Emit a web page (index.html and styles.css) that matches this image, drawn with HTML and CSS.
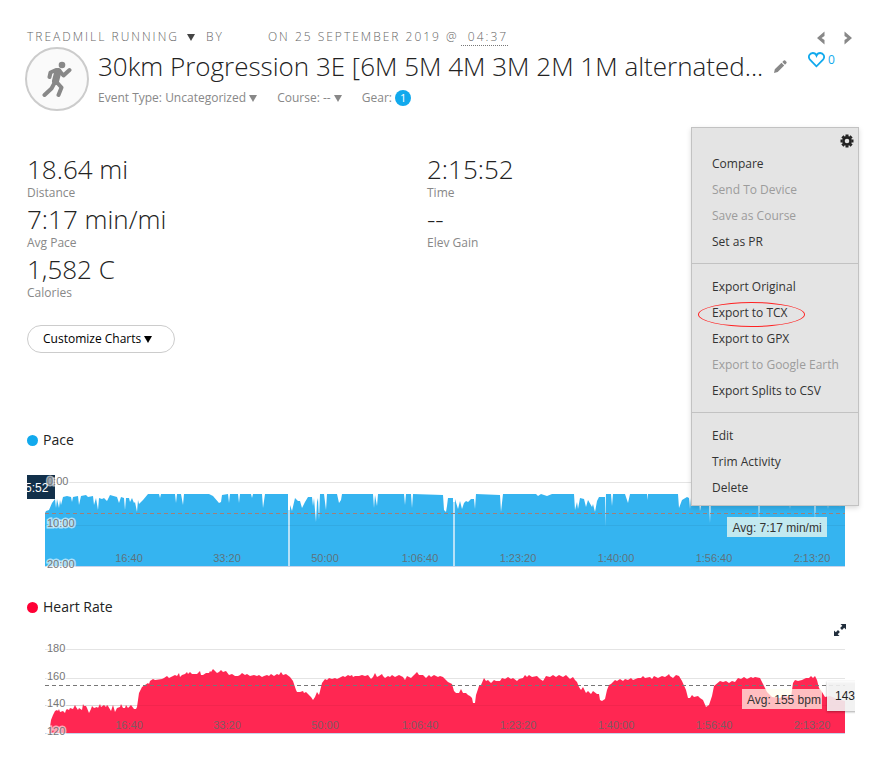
FILE: index.html
```html
<!DOCTYPE html>
<html lang="en">
<head>
<meta charset="utf-8">
<title>30km Progression</title>
<link rel="stylesheet" href="styles.css">
</head>
<body>
<header class="activity">
  <div class="byline">
    <button class="type" type="button">Treadmill Running <svg class="caret" viewBox="0 0 8 7"><path d="M0 0h8L4 7z"/></svg></button>
    <span>by</span>
    <span class="date">on 25 September 2019 @<a class="time" href="#"> 04:37</a></span>
  </div>
  <nav class="pager">
    <a href="#" aria-label="Previous"><svg width="8" height="14" viewBox="0 0 8 14"><path d="M7.500 .5v4.500L4.500 7l3 2v4.500L0 7z"/></svg></a>
    <a href="#" aria-label="Next"><svg width="8" height="14" viewBox="0 0 8 14"><path d="M.5 .5v4.500L3.500 7l-3 2v4.500L8 7z"/></svg></a>
  </nav>
  <div class="summary">
    <div class="badge">
      <svg width="30" height="36" viewBox="0 0 30 36"><circle cx="20" cy="4" r="3.300"/><g fill="none" stroke="#888" stroke-linecap="round" stroke-linejoin="round"><path d="M16 10.500l-2.500 9.500" stroke-width="7"/><path d="M14 9L8.500 11.500 7.500 16M18 10.500l3.500 4L27.500 9M13 21l-3.500 6.500L2.500 34M15 21.500l4.500 5L16.500 34" stroke-width="4"/></g></svg>
    </div>
    <div class="naming">
      <div class="titlebar">
        <h1>30km Progression 3E [6M 5M 4M 3M 2M 1M alternated...</h1>
        <button class="edit" type="button" aria-label="Edit title"><svg width="13" height="13" viewBox="0 0 13 13"><path d="M0 13l.8-3.800L7.500 2.800l2.700 2.700L3.700 12zM8.300 2L9.800.5Q10.500 0 11.200.6l1.200 1.200q.6.700 0 1.400L11 4.700z"/></svg></button>
      </div>
      <div class="meta">
        <button type="button">Event Type: Uncategorized <svg class="caret" viewBox="0 0 8 7"><path d="M0 0h8L4 7z"/></svg></button>
        <button type="button">Course: -- <svg class="caret" viewBox="0 0 8 7"><path d="M0 0h8L4 7z"/></svg></button>
        <span>Gear: <b class="count">1</b></span>
      </div>
    </div>
  </div>
  <button class="like" type="button" aria-label="Like"><svg width="17" height="16" viewBox="0 0 17 16"><path d="M8.500 14.300L2.200 8C-.8 4.500 2 1 4.800 1 6.800 1 8 2.300 8.500 3.600 9 2.300 10.200 1 12.200 1 15 1 17.800 4.500 14.800 8z" fill="none" stroke="#11a9ed" stroke-width="1.800"/></svg> 0</button>
</header>

<main>
  <section class="overview">
    <dl class="stats">
      <div><dd>18.64 mi</dd><dt>Distance</dt></div>
      <div><dd>2:15:52</dd><dt>Time</dt></div>
      <div><dd>7:17 min/mi</dd><dt>Avg Pace</dt></div>
      <div><dd>--</dd><dt>Elev Gain</dt></div>
      <div><dd>1,582 C</dd><dt>Calories</dt></div>
    </dl>
    <button class="customize" type="button">Customize Charts <svg class="caret" viewBox="0 0 8 7"><path d="M0 0h8L4 7z"/></svg></button>
    <aside class="menu">
      <button class="gear" type="button" aria-label="Settings"><svg width="14" height="14" viewBox="-7 -7 14 14"><g fill="none" stroke="#222"><circle r="3.600" stroke-width="2.600"/><path d="M0-6.500v2M0 6.500v-2M-6.500 0h2M6.500 0h-2M-4.600-4.600l1.400 1.400M4.600 4.600l-1.400-1.400M-4.600 4.600l1.400-1.400M4.600-4.600l-1.400 1.400" stroke-width="3"/></g></svg></button>
      <ul>
        <li><button type="button">Compare</button></li>
        <li><button type="button" disabled>Send To Device</button></li>
        <li><button type="button" disabled>Save as Course</button></li>
        <li><button type="button">Set as PR</button></li>
      </ul>
      <ul>
        <li><button type="button">Export Original</button></li>
        <li class="marked"><button type="button">Export to TCX</button></li>
        <li><button type="button">Export to GPX</button></li>
        <li><button type="button" disabled>Export to Google Earth</button></li>
        <li><button type="button">Export Splits to CSV</button></li>
      </ul>
      <ul>
        <li><button type="button">Edit</button></li>
        <li><button type="button">Trim Activity</button></li>
        <li><button type="button">Delete</button></li>
      </ul>
    </aside>
  </section>

  <section class="chart pace">
    <h2>Pace</h2>
    <svg class="plot" viewBox="-18 -8 828 100">
      <path class="grid" d="M0 .5H800"/>
      <path class="ghost" d="M243 28h2v56h-2zM408 20h2v64h-2z"/>
      <path class="area" d="M0 84V31L1 29 4 28 7 21 10 17 11 26 12 17 14 26 15 18 16 23 18 15 22 14 26 15 27 20 28 15 33 14 34 23 36 14 41 13 43 15 48 14 49 23 51 16 53 28 54 16 57 17 59 16 62 19 65 13 72 15 74 21 76 15 79 16 80 28 81 16 84 16 85 20 87 16 89 21 90 20 92 30 93 18 94 22 98 18 103 12 114 12 115 16 116 12 130 12 131 21 132 12 136 12 138 23 139 12 164 12 168 14 174 21 176 20 177 13 183 12 184 21 185 12 193 12 194 21 195 12 206 12 207 16 208 12 217 12 218 26 220 12 243 12V84H245V23L247 29 250 16 253 19 255 19 257 26 260 20 263 15 267 15 268 24 269 16 271 40 272 20 273 16 274 38 275 12 279 12 281 28 282 12 292 12 294 21 296 18 297 12 328 12 329 26 330 13 332 24 333 12 359 12 360 23 361 12 366 12 367 26 368 12 398 13 399 28 401 30 402 24 403 16 408 16V84H410V17L413 27 415 19 417 27 419 21 421 19 423 20 426 17 429 17 430 27 431 12 455 13 456 30 458 12 491 12 493 14 496 12 502 14 507 12 525 12 529 12 530 28 532 20 533 27 535 16 539 17 541 25 543 18 547 25 548 22 550 30 552 19 554 15 560 15 560 45 561 12 566 12 567 24 568 12 580 12 583 21 585 12 602 12 602 18 603 12 633 12 634 26 637 18 642 15 644 16 645 27 646 16 654 18 655 29 657 18 664 18 665 41 666 14 713 14 714 38 715 15 744 15 745 27 746 15 769 15 770 38 771 15 782 15 783 27 784 15 794 15 795 25 796 15H800V84z"/>
      <path class="grid inner" d="M0 43.500H800"/>
      <path class="base" d="M0 84.500H800"/>
      <path class="avg warm" d="M0 31.500H800"/>
      <rect class="cursor" x="-18" y="-7" width="28" height="24"/>
      <text class="cursor-text" x="-20" y="10">5:52</text>
      <g class="y"><text x="2" y="3">0:00</text><text x="2" y="45">10:00</text><text x="2" y="86">20:00</text></g>
      <g class="x"><text x="84" y="80">16:40</text><text x="182" y="80">33:20</text><text x="280" y="80">50:00</text><text x="375" y="80">1:06:40</text><text x="473" y="80">1:23:20</text><text x="571" y="80">1:40:00</text><text x="669" y="80">1:56:40</text><text x="767" y="80">2:13:20</text></g>
      <rect class="tag" x="682" y="35" width="100" height="20"/>
      <text class="tag-text" x="732" y="50">Avg: 7:17 min/mi</text>
    </svg>
  </section>

  <section class="chart heart">
    <h2>Heart Rate</h2>
    <button class="expand" type="button" aria-label="Expand"><svg width="12" height="12" viewBox="0 0 12 12"><path d="M6.500 0H12v5.500L10.200 3.700 8 5.900 6.100 4 8.300 1.800zM5.500 12H0V6.500L1.800 8.300 4 6.100 5.900 8 3.700 10.200z"/></svg></button>
    <svg class="plot" viewBox="-18 -8 828 100">
      <path class="grid" d="M0-.5H800M0 28.500H800M0 55.500H800"/>
      <path class="area" d="M4 83L5 77 6 70 8 65 10 61 12 60 13 61 14 59 15 62 18 61 20 63 21 60 22 59 24 60 25 58 28 59 30 55 31 57 33 60 34 58 37 60 38 54 39 56 41 56 42 58 44 63 46 59 47 56 49 58 52 57 53 58 55 54 56 57 59 55 61 57 62 55 63 56 66 61 68 55 70 62 72 58 75 57 76 54 77 56 78 58 80 58 81 55 83 58 86 55 89 59 91 59 92 57 94 43 97 37 100 35 103 33 104 34 105 31 108 29 110 30 117 29 119 28 122 26 124 28 126 27 130 25 132 26 134 23 135 27 137 25 140 24 142 22 143 24 145 22 147 24 152 24 155 21 156 25 158 25 161 23 164 23 165 21 166 22 168 19 170 21 172 23 174 22 176 20 178 22 181 21 184 25 187 24 190 26 193 26 195 25 197 23 200 25 202 24 205 26 209 25 212 26 214 25 217 27 219 26 222 25 224 26 226 24 229 26 232 24 234 25 236 22 238 25 241 24 245 27 248 31 251 40 252 42 255 42 258 41 259 43 261 42 263 44 266 47 268 50 270 47 272 42 274 45 277 33 280 29 282 30 284 28 287 29 290 28 292 29 298 26 300 27 303 25 305 26 307 25 308 27 310 26 314 26 317 25 320 26 323 25 326 29 328 27 330 23 332 27 334 26 337 24 338 26 340 28 343 26 345 27 347 25 350 27 354 25 358 27 360 30 362 26 366 28 369 25 372 22 374 25 378 25 381 28 384 25 386 27 389 25 393 27 395 26 398 27 403 32 407 34 409 41 411 43 414 43 416 39 418 43 421 43 423 45 425 46 427 48 428 53 430 53 431 45 434 36 436 35 439 28 441 31 443 30 446 33 449 30 451 31 455 31 457 28 460 29 463 27 466 29 468 28 472 31 474 29 478 28 480 25 482 27 484 25 487 27 492 26 495 29 498 31 501 26 505 27 508 25 511 27 514 25 518 27 521 25 525 29 528 27 530 30 532 32 534 37 536 40 538 37 541 43 543 41 546 44 548 41 552 44 554 44 555 50 557 51 560 49 562 40 564 35 566 34 570 30 572 31 575 29 578 31 580 29 583 30 586 28 588 30 593 28 596 28 598 26 600 28 605 27 607 29 609 26 613 28 617 26 620 27 623 25 624 24 625 26 628 28 631 25 634 26 637 31 641 40 643 48 645 48 647 45 649 47 653 46 655 48 658 50 661 57 664 55 667 46 669 36 675 31 678 32 681 31 684 33 687 31 690 32 693 28 696 29 699 27 702 29 706 27 708 28 710 27 715 28 718 34 722 42 727 47 735 48 738 46 746 47 748 33 750 30 753 31 757 30 761 28 764 28 766 26 768 28 770 26 772 30 774 38 777 42 780 47 785 46 792 49 800 51V83z"/>
      <path class="grid inner" d="M0 55.500H800"/>
      <path class="base" d="M0 83.500H800"/>
      <path class="avg" d="M0 35.500H800"/>
      <g class="y"><text x="2" y="2">180</text><text x="2" y="30">160</text><text x="2" y="57">140</text><text x="2" y="85">120</text></g>
      <g class="x"><text x="84" y="79">16:40</text><text x="182" y="79">33:20</text><text x="280" y="79">50:00</text><text x="375" y="79">1:06:40</text><text x="473" y="79">1:23:20</text><text x="571" y="79">1:40:00</text><text x="669" y="79">1:56:40</text><text x="767" y="79">2:13:20</text></g>
      <rect class="tag" x="697" y="39" width="80" height="20"/>
      <text class="tag-text" x="739" y="54">Avg: 155 bpm</text>
      <rect class="value" x="782" y="31" width="34" height="30"/>
      <text class="value-text" x="790" y="50">143</text>
    </svg>
  </section>
</main>
</body>
</html>
```
FILE: styles.css
```css
* { box-sizing: border-box; }

body {
  margin: 0;
  padding: 28px 12px 24px 27px;
  background: #fff;
  color: #222;
  font: 12px/18px "Open Sans", sans-serif;
}

button {
  padding: 0;
  border: 0;
  background: none;
  color: inherit;
  font: inherit;
  letter-spacing: inherit;
  text-transform: inherit;
}

.caret { width: 8px; height: 7px; fill: currentColor; }

.activity {
  display: grid;
  grid-template-columns: minmax(0, 1fr) 51px;
  color: #888;
}

.byline {
  display: flex;
  align-items: flex-start;
  gap: 11px;
  height: 19px;
  color: #666;
  font-weight: 300;
  letter-spacing: 2px;
  text-transform: uppercase;
  white-space: nowrap;
}
.byline .caret { margin-left: 3px; color: #444; }
.date { margin-left: 33px; }
.time {
  margin-left: 2px;
  padding-left: 2px;
  border-bottom: 1px dotted #777;
  color: inherit;
  text-decoration: none;
}

.pager {
  display: flex;
  justify-content: space-between;
  align-items: center;
  padding: 1px 7px 0 9px;
}
.pager a { display: flex; }
.pager svg { fill: #888; }

.summary { display: flex; gap: 9px; margin-left: -2px; }

.badge {
  display: flex;
  flex: none;
  align-items: center;
  justify-content: center;
  width: 64px;
  height: 64px;
  border: 2px solid #ccc;
  border-radius: 50%;
  background: #fafafa;
  fill: #888;
}

.naming { min-width: 0; }
.titlebar { display: flex; align-items: center; gap: 11px; height: 38px; }

h1 {
  overflow: hidden;
  margin: 0;
  color: #222;
  font-size: 26px;
  font-weight: 300;
  line-height: 38px;
  white-space: nowrap;
}

.edit { display: flex; fill: #888; }

.meta { display: flex; gap: 20px; height: 26px; line-height: 26px; white-space: nowrap; }
.count {
  display: inline-block;
  width: 16px;
  height: 16px;
  border-radius: 50%;
  background: #11a9ed;
  color: #fff;
  font-size: 11px;
  font-weight: 400;
  line-height: 16px;
  text-align: center;
}

.like {
  display: flex;
  align-items: center;
  align-self: start;
  gap: 3px;
  height: 26px;
  color: #11a9ed;
}

.overview { position: relative; padding-top: 43px; }

.stats {
  display: grid;
  grid-template-columns: 400px 1fr;
  row-gap: 3px;
  margin: 0;
}
.stats > div { display: flex; flex-direction: column; }
dd {
  margin: 0;
  font-size: 26px;
  font-weight: 300;
  line-height: 30px;
}
dt { padding-top: 1px; color: #888; line-height: 16px; }

.customize {
  height: 28px;
  margin-top: 24px;
  padding: 0 22px 0 15px;
  border: 1px solid #ccc;
  border-radius: 14px;
  color: #000;
}

.menu {
  position: absolute;
  z-index: 1;
  top: 16px;
  right: 0;
  width: 168px;
  border: 1px solid #c2c2c2;
  background: #e4e4e4;
  box-shadow: 0 2px 5px rgba(0, 0, 0, .15);
  line-height: 26px;
}
.gear { position: absolute; top: 6px; right: 4px; display: flex; }
.menu ul { margin: 0; padding: 10px 20px 8px; list-style: none; }
.menu ul + ul { border-top: 1px solid #c2c2c2; }
.menu ul:first-of-type { padding-top: 23px; }
.menu ul:last-of-type { padding-bottom: 4px; }
.menu li { position: relative; height: 26px; white-space: nowrap; }
.menu li button { color: #333; }
.menu li button:disabled { color: #9c9c9c; }
.marked::after {
  content: "";
  position: absolute;
  top: 2px;
  left: -14px;
  width: 105px;
  height: 23px;
  border: 1px solid #f22;
  border-radius: 50%;
}

.chart { position: relative; padding-right: 4px; }
.pace { margin-top: 77px; }
.heart { margin-top: 23px; }

h2 {
  display: flex;
  align-items: center;
  gap: 5px;
  margin: 0;
  font-size: 14px;
  font-weight: 400;
  line-height: 20px;
}
h2::before { content: ""; width: 11px; height: 11px; border-radius: 50%; background: #11a9ed; }
.heart h2::before { background: #ff0035; }

.expand { position: absolute; top: 27px; right: 13px; display: flex; fill: #222f3d; }

.plot {
  display: block;
  width: 100%;
  margin-top: 24px;
  overflow: hidden;
  font-family: "Liberation Sans", sans-serif;
  font-size: 11px;
}
.heart .plot { margin-top: 25px; }

.area { fill: #35b4f0; }
.heart .area { fill: #ff2752; }
.ghost { fill: #b5e1f8; }
.grid { stroke: #e4e4e4; }
.grid.inner { stroke: #000; stroke-opacity: .05; }
.base { stroke: #c8d4ea; }
.avg { stroke: #777; stroke-dasharray: 4 3; }
.avg.warm { stroke: #a08078; }
.y text { fill: #777; stroke: #fff; stroke-opacity: .6; stroke-width: 3px; paint-order: stroke; }
.x text { fill: #666; fill-opacity: .85; text-anchor: middle; }
.cursor { fill: #12304a; }
.cursor-text { fill: #fff; font-size: 12px; }
.tag { fill: #fffff0; fill-opacity: .7; }
.tag-text { fill: #333; font-size: 12px; text-anchor: middle; }
.value { fill: #fff; fill-opacity: .85; filter: drop-shadow(0 1px 1px rgba(0, 0, 0, .4)); }
.value-text { fill: #222; font-size: 12px; }
```
